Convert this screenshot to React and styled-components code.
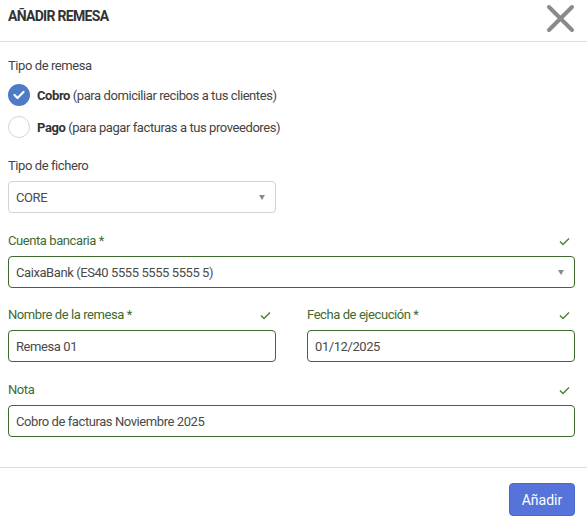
import styled, { createGlobalStyle } from "styled-components";

const GlobalStyle = createGlobalStyle`
  body {
    margin: 0;
    background: #fff;
    font-family: Roboto, "Liberation Sans", sans-serif;
    color: #444;
  }
`;

const Modal = styled.div`
  width: 587px;
  height: 525px;
  display: flex;
  flex-direction: column;
  background: #fff;
`;

const Header = styled.div`
  height: 42px;
  border-bottom: 1px solid #dedede;
  display: flex;
  justify-content: space-between;
  align-items: flex-start;
  padding: 6px 12px 0 8px;
  box-sizing: border-box;
`;

const Title = styled.h1`
  margin: 0;
  font-size: 14px;
  line-height: 20px;
  font-weight: 700;
  color: #333;
  letter-spacing: -0.7px;
`;

const CloseBtn = styled.button`
  border: none;
  background: none;
  padding: 0;
  margin: -3px -1px 0 0;
  cursor: pointer;
  display: flex;
`;

const Body = styled.div`
  padding: 15px 12px 0 8px;
  display: flex;
  flex-direction: column;
  letter-spacing: -0.42px;
`;

const Label = styled.div`
  font-size: 13px;
  line-height: 18px;
  color: ${(p) => (p.$valid ? "#3f6a31" : "#444")};
`;

const RadioGroup = styled.div`
  margin-top: 4px;
  display: flex;
  flex-direction: column;
`;

const RadioRow = styled.label`
  height: 32px;
  display: flex;
  align-items: center;
  gap: 7px;
  font-size: 13px;
  color: #444;
  cursor: pointer;
  b {
    color: #333;
    font-weight: 700;
  }
`;

const RadioDot = styled.span`
  width: 22px;
  height: 22px;
  border-radius: 50%;
  box-sizing: border-box;
  display: flex;
  align-items: center;
  justify-content: center;
  background: ${(p) => (p.$checked ? "#4f7bc6" : "#fff")};
  border: ${(p) => (p.$checked ? "none" : "1px solid #d6d6d6")};
`;

const Field = styled.div`
  display: flex;
  flex-direction: column;
  margin-top: ${(p) => p.$top || 0}px;
  width: ${(p) => p.$width || "auto"};
`;

const LabelRow = styled.div`
  display: flex;
  justify-content: space-between;
  align-items: center;
  padding-right: 5px;
  margin-bottom: 6px;
`;

const Box = styled.div`
  height: 32px;
  box-sizing: border-box;
  border: 1px solid ${(p) => (p.$valid ? "#3d6a2c" : "#d4d4d4")};
  border-radius: 4px;
  display: flex;
  align-items: center;
  justify-content: space-between;
  padding: 0 8px 0 7px;
  font-size: 13px;
  color: #4a4a4a;
`;

const Arrow = styled.span`
  width: 0;
  height: 0;
  border-left: 3.5px solid transparent;
  border-right: 3.5px solid transparent;
  border-top: 5px solid #8a8a8a;
  margin-right: 2px;
`;

const Row = styled.div`
  display: grid;
  grid-template-columns: 1fr 1fr;
  column-gap: 31px;
  margin-top: 18px;
`;

const Footer = styled.div`
  margin-top: 30px;
  border-top: 1px solid #dedede;
  display: flex;
  justify-content: flex-end;
  padding: 15px 12px 0 0;
`;

const PrimaryBtn = styled.button`
  width: 66px;
  height: 33px;
  border: 1px solid #4b66cc;
  border-radius: 4px;
  background: #5673da;
  color: #fff;
  font-family: Roboto, "Liberation Sans", sans-serif;
  font-size: 14px;
  cursor: pointer;
`;

const Check = () => (
  <svg width="11" height="9" viewBox="0 0 11 9">
    <path d="M1 4.5 L4 7.5 L10 1.5" fill="none" stroke="#4f8236" strokeWidth="1.5" />
  </svg>
);

const Close = () => (
  <svg width="31" height="31" viewBox="0 0 31 31">
    <path d="M4 4 L27 27 M27 4 L4 27" stroke="#8a8a8a" strokeWidth="4" strokeLinecap="round" />
  </svg>
);

function LabeledField({ label, valid, select, value, top, width }) {
  return (
    <Field $top={top} $width={width}>
      <LabelRow>
        <Label $valid={valid}>{label}</Label>
        {valid && <Check />}
      </LabelRow>
      <Box $valid={valid}>
        <span>{value}</span>
        {select && <Arrow />}
      </Box>
    </Field>
  );
}

export default function App() {
  return (
    <Modal>
      <GlobalStyle />
      <Header>
        <Title>AÑADIR REMESA</Title>
        <CloseBtn type="button">
          <Close />
        </CloseBtn>
      </Header>
      <Body>
        <Label>Tipo de remesa</Label>
        <RadioGroup>
          <RadioRow>
            <RadioDot $checked>
              <svg width="12" height="10" viewBox="0 0 12 10">
                <path d="M1.5 5 L4.5 8 L10.5 2" fill="none" stroke="#fff" strokeWidth="2.2" strokeLinecap="round" strokeLinejoin="round" />
              </svg>
            </RadioDot>
            <span>
              <b>Cobro</b> (para domiciliar recibos a tus clientes)
            </span>
          </RadioRow>
          <RadioRow>
            <RadioDot />
            <span>
              <b>Pago</b> (para pagar facturas a tus proveedores)
            </span>
          </RadioRow>
        </RadioGroup>
        <LabeledField label="Tipo de fichero" value="CORE" select top={14} width="268px" />
        <LabeledField label="Cuenta bancaria *" value="CaixaBank (ES40 5555 5555 5555 5)" select valid top={19} />
        <Row>
          <LabeledField label="Nombre de la remesa *" value="Remesa 01" valid />
          <LabeledField label="Fecha de ejecución *" value="01/12/2025" valid />
        </Row>
        <LabeledField label="Nota" value="Cobro de facturas Noviembre 2025" valid top={19} />
      </Body>
      <Footer>
        <PrimaryBtn type="button">Añadir</PrimaryBtn>
      </Footer>
    </Modal>
  );
}
